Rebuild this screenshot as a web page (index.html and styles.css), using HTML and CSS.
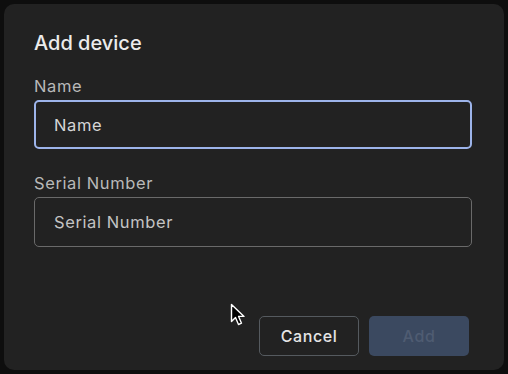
FILE: index.html
```html
<!DOCTYPE html>
<html lang="en">
<head>
    <meta charset="UTF-8">
    <meta name="viewport" content="width=device-width, initial-scale=1.0">
    <title>Add device</title>
    <link rel="stylesheet" href="styles.css">
</head>
<body>
    <div class="dialog">
        <h2 class="dialog-title">Add device</h2>

        <label class="field-label" for="deviceName">Name</label>
        <input class="text-field focused" id="deviceName" type="text" placeholder="Name">

        <label class="field-label" for="serialNumber">Serial Number</label>
        <input class="text-field" id="serialNumber" type="text" placeholder="Serial Number">

        <div class="dialog-actions">
            <button class="btn btn-outline">Cancel</button>
            <button class="btn btn-primary" disabled>Add</button>
        </div>
    </div>

    <svg class="mouse-cursor" width="16" height="24" viewBox="0 0 16 24">
        <path d="M1.5 1.5 L1.5 18.5 L5.5 14.5 L8.5 21.5 L11.5 20.2 L8.6 13.4 L14 13.4 Z" fill="#000" stroke="#fff" stroke-width="1.4" stroke-linejoin="round"/>
    </svg>
</body>
</html>
```

FILE: styles.css
```css
:root {
    --page-bg: #0e0e0e;
    --dialog-bg: #222222;
    --text-main: #ececec;
    --text-muted: #b9b9b9;
    --border: #6a6a6a;
    --focus: #9db4ea;
    --primary-disabled: #3b4960;
}

* {
    margin: 0;
    padding: 0;
    box-sizing: border-box;
}

body {
    font-family: 'Inter', sans-serif;
    background-color: var(--page-bg);
    padding: 4px;
    height: 374px;
    overflow: hidden;
}

.dialog {
    width: 500px;
    height: 366px;
    background-color: var(--dialog-bg);
    border-radius: 10px;
    padding: 27px 32px 14px 30px;
    display: flex;
    flex-direction: column;
}

.dialog-title {
    font-size: 20px;
    line-height: 24px;
    font-weight: 500;
    color: var(--text-main);
    margin-bottom: 21px;
}

.field-label {
    font-size: 16.5px;
    line-height: 20px;
    letter-spacing: 0.6px;
    color: var(--text-muted);
    margin-bottom: 4px;
}

.text-field {
    width: 438px;
    height: 50px;
    background: transparent;
    border: 1px solid var(--border);
    border-radius: 5px;
    padding: 0 19px;
    font-family: 'Inter', sans-serif;
    font-size: 16.5px;
    letter-spacing: 0.6px;
    color: var(--text-main);
    outline: none;
    margin-bottom: 24px;
}

.text-field.focused {
    border: 2px solid var(--focus);
    height: 49px;
    padding: 0 18px;
}

.text-field::placeholder {
    color: #c4c4c4;
}

.text-field.focused::placeholder {
    color: #d6d6d6;
}

.dialog-actions {
    margin-top: auto;
    display: flex;
    justify-content: flex-end;
    gap: 10px;
    padding-right: 3px;
}

.btn {
    width: 100px;
    height: 40px;
    border-radius: 5px;
    font-family: 'Inter', sans-serif;
    font-size: 16px;
    font-weight: 500;
    letter-spacing: 0.6px;
}

.btn-outline {
    background: transparent;
    border: 1px solid #555a5f;
    color: #e6e6e6;
}

.btn-primary {
    background-color: var(--primary-disabled);
    border: none;
    color: #4f5c72;
}

.mouse-cursor {
    position: absolute;
    left: 230px;
    top: 303px;
}
```
